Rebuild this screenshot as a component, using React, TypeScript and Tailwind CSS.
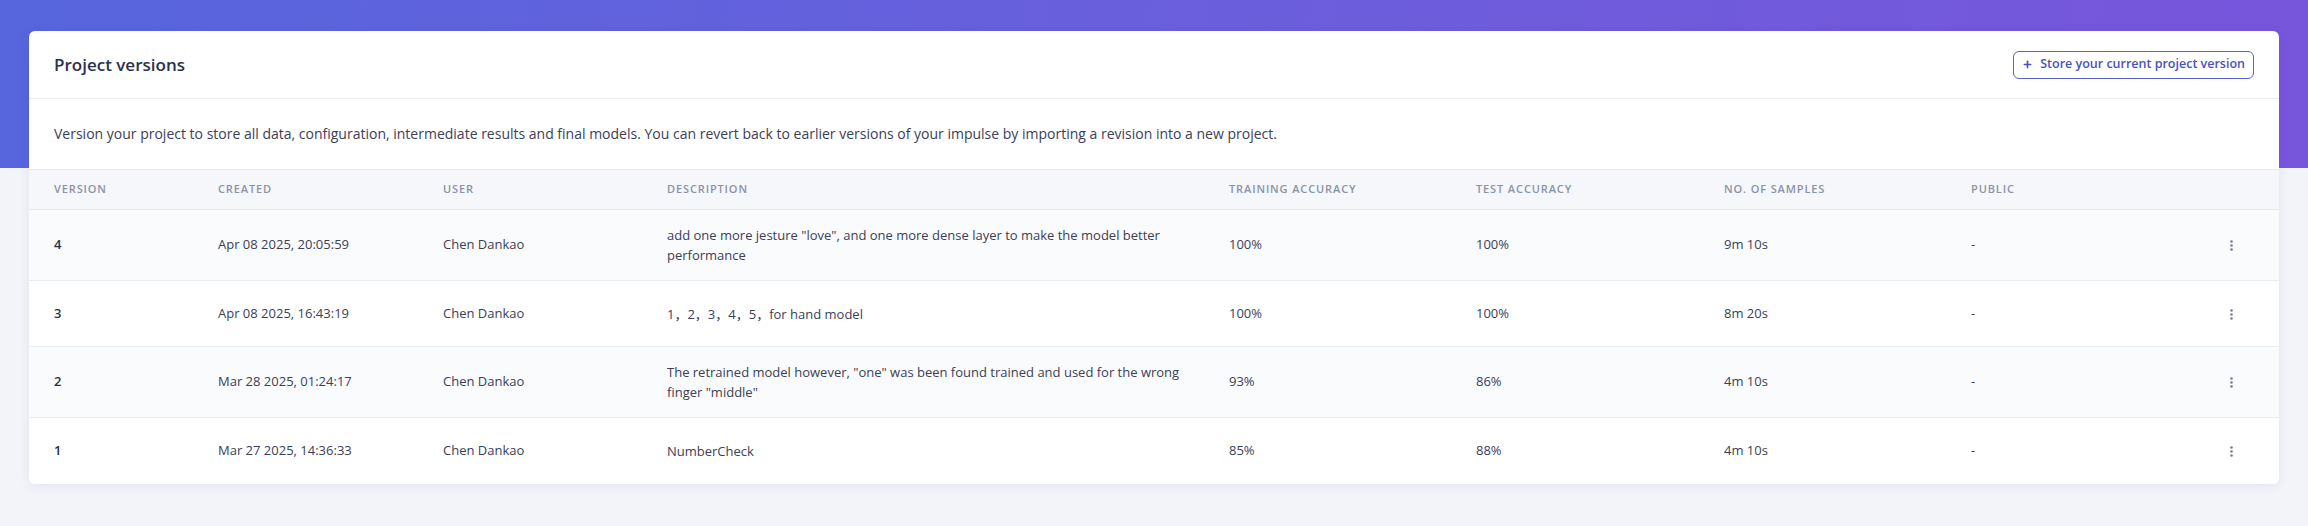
import { Plus } from "lucide-react";

const VERSIONS = [
  {
    version: "4",
    created: "Apr 08 2025, 20:05:59",
    user: "Chen Dankao",
    description:
      'add one more jesture "love", and one more dense layer to make the model better performance',
    training: "100%",
    test: "100%",
    samples: "9m 10s",
    public: "-",
  },
  {
    version: "3",
    created: "Apr 08 2025, 16:43:19",
    user: "Chen Dankao",
    description: "1，2，3，4，5，for hand model",
    training: "100%",
    test: "100%",
    samples: "8m 20s",
    public: "-",
  },
  {
    version: "2",
    created: "Mar 28 2025, 01:24:17",
    user: "Chen Dankao",
    description:
      'The retrained model however, "one" was been found trained and used for the wrong finger "middle"',
    training: "93%",
    test: "86%",
    samples: "4m 10s",
    public: "-",
  },
  {
    version: "1",
    created: "Mar 27 2025, 14:36:33",
    user: "Chen Dankao",
    description: "NumberCheck",
    training: "85%",
    test: "88%",
    samples: "4m 10s",
    public: "-",
  },
];

const COLUMNS = [
  "Version",
  "Created",
  "User",
  "Description",
  "Training accuracy",
  "Test accuracy",
  "No. of samples",
  "Public",
];

function Kebab() {
  return (
    <svg width="3" height="11" viewBox="0 0 3 11" aria-hidden="true" className="inline-block align-middle">
      <circle cx="1.5" cy="1.5" r="1.3" fill="#777d8c" />
      <circle cx="1.5" cy="5.5" r="1.3" fill="#777d8c" />
      <circle cx="1.5" cy="9.5" r="1.3" fill="#777d8c" />
    </svg>
  );
}

export default function App() {
  return (
    <div className="h-[526px] overflow-hidden bg-[#f3f4f9] bg-[linear-gradient(100deg,#5766dd,#6a5fdd_50%,#7856dc)] bg-[length:100%_168px] bg-no-repeat pt-[31px] font-['Open_Sans','Noto_Sans','Noto_Sans_CJK_SC',sans-serif] text-[14px] text-[#3b4057]">
      <div className="mx-[29px] overflow-hidden rounded-[6px] bg-white shadow-[0_2px_12px_rgba(40,50,90,0.08)]">
        <div className="flex h-[68px] items-center justify-between border-b border-[#e9ecf1] px-[25px]">
          <h2 className="text-[17px] font-semibold text-[#2c3050]">Project versions</h2>
          <button className="flex h-[28px] items-center gap-[7px] rounded-[6px] border border-[#5862c9] pr-[8px] pl-[8px] text-[12.5px] font-semibold text-[#4953bd]">
            <Plus size={11} strokeWidth={3.5} />
            Store your current project version
          </button>
        </div>

        <p className="px-[25px] py-[25px] leading-[20px]">
          Version your project to store all data, configuration, intermediate results and final
          models. You can revert back to earlier versions of your impulse by importing a revision
          into a new project.
        </p>

        <table className="w-full table-fixed border-collapse text-[13px]">
          <colgroup>
            <col className="w-[164px]" />
            <col className="w-[225px]" />
            <col className="w-[224px]" />
            <col className="w-[562px]" />
            <col className="w-[247px]" />
            <col className="w-[248px]" />
            <col className="w-[247px]" />
            <col />
            <col className="w-[96px]" />
          </colgroup>
          <thead>
            <tr className="h-[40px] border-y border-[#e6e9ef] bg-[#f5f7fb]">
              {COLUMNS.map((col) => (
                <th
                  key={col}
                  className="px-[25px] text-left text-[11px] font-semibold tracking-[0.08em] text-[#8b93a5] uppercase"
                >
                  {col}
                </th>
              ))}
              <th />
            </tr>
          </thead>
          <tbody>
            {VERSIONS.map((row, i) => (
              <tr
                key={row.version}
                className={`border-b border-[#e9ecf1] last:border-b-0 ${i % 2 === 0 ? "bg-[#fafbfd]" : "bg-white"}`}
              >
                <td className="h-[66px] px-[25px] py-[15px] font-semibold text-[#2c3050]">{row.version}</td>
                <td className="px-[25px] py-[15px]">{row.created}</td>
                <td className="px-[25px] py-[15px]">{row.user}</td>
                <td className="py-[15px] pr-[20px] pl-[25px] leading-[20px]">{row.description}</td>
                <td className="px-[25px] py-[15px]">{row.training}</td>
                <td className="px-[25px] py-[15px]">{row.test}</td>
                <td className="px-[25px] py-[15px]">{row.samples}</td>
                <td className="px-[25px] py-[15px]">{row.public}</td>
                <td className="py-[15px] text-center">
                  <Kebab />
                </td>
              </tr>
            ))}
          </tbody>
        </table>
      </div>
    </div>
  );
}
